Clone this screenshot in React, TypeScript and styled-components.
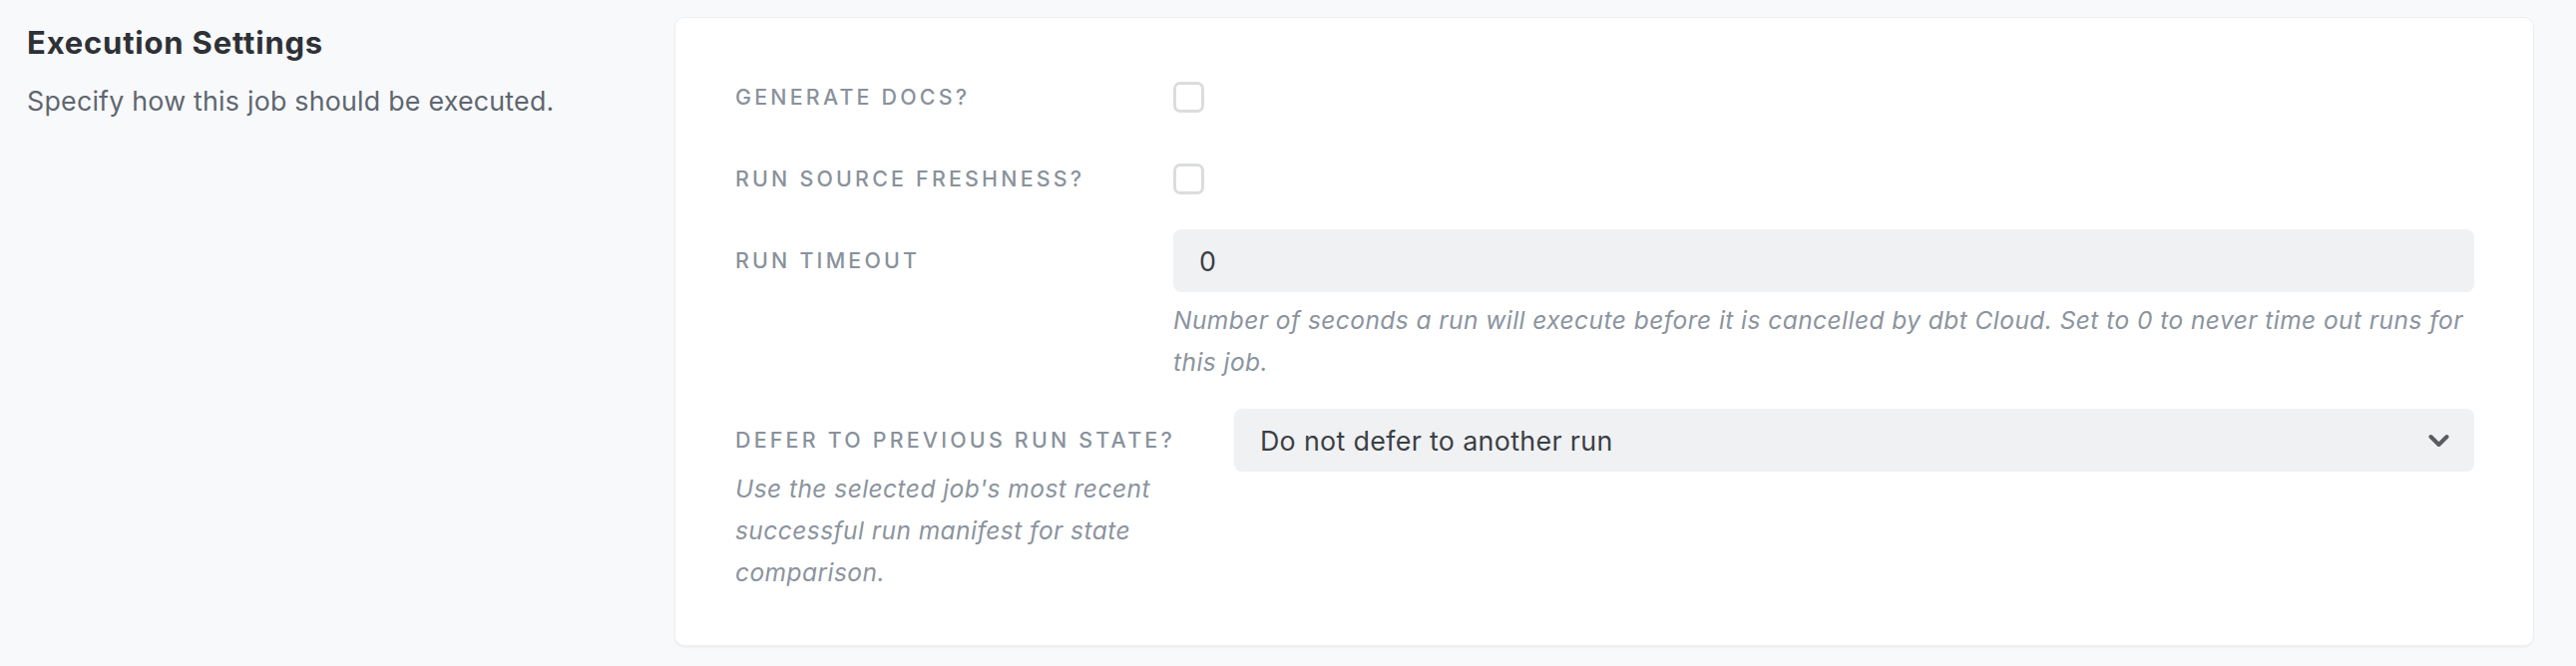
import React from "react";
import styled, { createGlobalStyle } from "styled-components";

const GlobalStyle = createGlobalStyle`
  html, body {
    margin: 0;
    padding: 0;
    background: #f8f9fb;
  }
  body {
    font-family: Inter, "Noto Sans", "Liberation Sans", sans-serif;
    -webkit-font-smoothing: antialiased;
  }
  * { box-sizing: border-box; }
`;

const Page = styled.div`
  display: flex;
  align-items: flex-start;
  padding: 17px 42px 20px 27px;
  min-height: 668px;
  background: #f8f9fb;
`;

const Intro = styled.div`
  flex: 0 0 649px;
  padding-top: 7px;
`;

const Title = styled.h2`
  margin: 0;
  font-size: 31px;
  line-height: 1.2;
  font-weight: 700;
  letter-spacing: 0.8px;
  color: #2e3136;
`;

const Subtitle = styled.p`
  margin: 20px 0 0;
  font-size: 26.8px;
  line-height: 1.5;
  letter-spacing: 0.22px;
  color: #5f6670;
`;

const Card = styled.section`
  flex: 1;
  min-width: 0;
  background: #ffffff;
  border: 1px solid #eceef1;
  border-radius: 10px;
  box-shadow: 0 2px 2px rgba(0, 0, 0, 0.04);
  padding: 48px 59px 52px 60px;
  display: flex;
  flex-direction: column;
  gap: 19px;
`;

const Field = styled.div`
  display: flex;
  align-items: flex-start;
`;

const LabelCol = styled.div`
  flex: 0 0 auto;
  width: min-content;
  min-width: 439px;
  padding-right: 59px;
`;

const Label = styled.div`
  white-space: nowrap;
  line-height: 63px;
  font-size: 21.4px;
  font-weight: 500;
  letter-spacing: 0.15em;
  text-transform: uppercase;
  color: #89929c;
`;

const Control = styled.div`
  flex: 1;
  min-width: 0;
  display: flex;
  flex-direction: column;
`;

const CheckWrap = styled.div`
  height: 63px;
  display: flex;
  align-items: center;
`;

const Checkbox = styled.input.attrs({ type: "checkbox" })`
  appearance: none;
  -webkit-appearance: none;
  margin: 0;
  width: 31px;
  height: 31px;
  border: 3px solid #dbdcdd;
  border-radius: 7px;
  background: #fff;
`;

const TextInput = styled.input`
  height: 63px;
  width: 100%;
  border: none;
  outline: none;
  border-radius: 8px;
  background: #f0f1f3;
  padding: 0 26px;
  font-family: inherit;
  font-size: 26.8px;
  letter-spacing: 0.35px;
  color: #3b3f45;
`;

const Helper = styled.p<{ $offset?: number }>`
  margin: ${(p) => p.$offset ?? 7}px 0 ${(p) => (p.$offset === undefined ? 7 : 0)}px;
  font-size: 24.5px;
  letter-spacing: 0.45px;
  line-height: 42px;
  font-style: italic;
  color: #8b949e;
  white-space: normal;
`;

const SelectBox = styled.div`
  height: 63px;
  border-radius: 8px;
  background: #f0f1f3;
  padding: 0 25px 0 26px;
  display: flex;
  align-items: center;
  justify-content: space-between;
  font-size: 26.8px;
  letter-spacing: 0.35px;
  color: #3b3f45;
`;

const Chevron = () => (
  <svg width="21" height="14" viewBox="0 0 21 14" aria-hidden="true">
    <path
      d="M2.5 3 L10.5 11 L18.5 3"
      fill="none"
      stroke="#5a5c5f"
      strokeWidth="4"
      strokeLinecap="round"
      strokeLinejoin="round"
    />
  </svg>
);

export default function App() {
  return (
    <>
      <GlobalStyle />
      <Page>
        <Intro>
          <Title>Execution Settings</Title>
          <Subtitle>Specify how this job should be executed.</Subtitle>
        </Intro>
        <Card>
          <Field>
            <LabelCol>
              <Label>Generate docs?</Label>
            </LabelCol>
            <Control>
              <CheckWrap>
                <Checkbox />
              </CheckWrap>
            </Control>
          </Field>
          <Field>
            <LabelCol>
              <Label>Run source freshness?</Label>
            </LabelCol>
            <Control>
              <CheckWrap>
                <Checkbox />
              </CheckWrap>
            </Control>
          </Field>
          <Field>
            <LabelCol>
              <Label>Run timeout</Label>
            </LabelCol>
            <Control>
              <TextInput defaultValue="0" />
              <Helper>
                Number of seconds a run will execute before it is cancelled by dbt Cloud. Set to 0 to never
                time out runs for this job.
              </Helper>
            </Control>
          </Field>
          <Field>
            <LabelCol>
              <Label>Defer to previous run state?</Label>
              <Helper $offset={-4}>
                Use the selected job's most recent successful run manifest for state comparison.
              </Helper>
            </LabelCol>
            <Control>
              <SelectBox>
                <span>Do not defer to another run</span>
                <Chevron />
              </SelectBox>
            </Control>
          </Field>
        </Card>
      </Page>
    </>
  );
}
